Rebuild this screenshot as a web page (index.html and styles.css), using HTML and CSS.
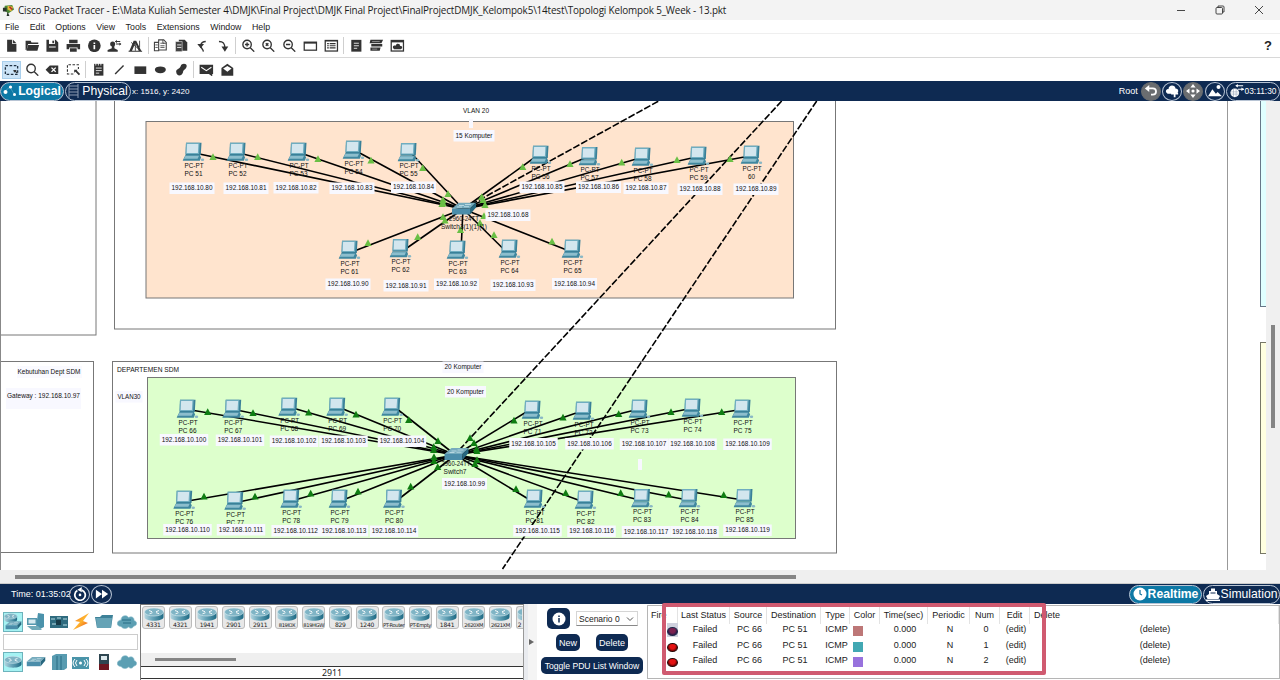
FILE: index.html
```html
<!DOCTYPE html>
<html lang="en">
<head>
<meta charset="utf-8">
<title>Cisco Packet Tracer</title>
<link rel="stylesheet" href="styles.css">
</head>
<body>
<svg class="defs" width="0" height="0" aria-hidden="true">
  <defs>
    <linearGradient id="body" x1="0" x2="1"><stop offset="0" stop-color="#b5d6e0"/><stop offset=".4" stop-color="#6ba7bb"/><stop offset="1" stop-color="#1d6a84"/></linearGradient>
    <linearGradient id="bolt" x1="0" y1="0" x2="1" y2="1"><stop offset="0" stop-color="#e85a1c"/><stop offset=".5" stop-color="#ffb52e"/><stop offset="1" stop-color="#e23a14"/></linearGradient>
    <symbol id="router" viewBox="0 0 20 14"><path d="M.5 4.500v5c0 5 19 5 19 0v-5z" fill="url(#body)"/><ellipse cx="10" cy="4.500" rx="9.500" ry="4" fill="#7fb4c5" stroke="#dceef3" stroke-width=".6"/><path d="M5 3l3 1.200M15 3l-3 1.200M5.500 6.300l3-1.100M15 6.200l-3-1.100" stroke="#fff" stroke-width=".9"/></symbol>
    <symbol id="pc" viewBox="0 0 22 19"><path d="M3.500 0H19l-.7 12.500H3z" fill="#3a8098"/><path d="M3.500 0h13.700l-.6 11.500H3z" fill="#6fadc0"/><path d="M4.600 1.400h11.300l-.5 9H4.200z" fill="#d3e6ee"/><path d="M3 12.500h14.500l1 2.500-1.200 3.300H0z" fill="#3f879f"/><path d="M3 13.200h13.500l-1.400 3H1.300z" fill="#8dbecd"/><ellipse cx="20" cy="17.200" rx="1.800" ry="1.200" fill="#8ab8c5"/></symbol>
    <symbol id="switch" viewBox="0 0 26 13"><path d="M1 6L8 0h17l-6 6z" fill="#76abbd"/><path d="M1 6h18v6H1z" fill="#4b8daa"/><path d="M19 6l6-6v5l-6 7z" fill="#27677f"/><path d="M8 3h5M14 2h6M6 4.500h5M13 4.200h5" stroke="#c8e2ea" stroke-width=".8"/></symbol>
    <symbol id="cloud" viewBox="0 0 20 14"><path d="M4 11.500C-1 11.500-1 5.500 4 5 4 0 10-.5 11.500 2.500c4-2 6 1 5.500 3 4 1 3 5.500 0 5.500-2 3-4 2.500-5.500 1-3 2.500-6 1.500-7.500-.5z" fill="#5c9fb3" stroke="#8abccb" stroke-width=".6"/></symbol>
  </defs>
</svg>

<div class="app">
  <header class="titlebar">
    <svg class="logo" viewBox="0 0 14 14"><path d="M3 2l8-1 2 5-6 4-5-3z" fill="#4d8a34"/><path d="M6 2l6 1-2 5-4-2z" fill="#e5b63b"/><path d="M1 4h4v4H1zM6 8l2 5H5z" fill="#29352c"/><path d="M8 3l3 3" stroke="#b52b27" stroke-width="1.500"/></svg>
    <span class="title">Cisco Packet Tracer - E:\Mata Kuliah Semester 4\DMJK\Final Project\DMJK Final Project\FinalProjectDMJK_Kelompok5\14test\Topologi Kelompok 5_Week - 13.pkt</span>
    <span class="winbtns">
      <svg viewBox="0 0 10 10"><path d="M1 5.500h8"/></svg>
      <svg viewBox="0 0 10 10"><rect x="1" y="2.500" width="6.500" height="6.500" rx="1"/><path d="M3 2.500V1h5q1 0 1 1v5H7.500"/></svg>
      <svg viewBox="0 0 10 10"><path d="M1 1l8 8M9 1L1 9"/></svg>
    </span>
  </header>
  <nav class="menu"><span>File</span><span>Edit</span><span>Options</span><span>View</span><span>Tools</span><span>Extensions</span><span>Window</span><span>Help</span></nav>

  <div class="toolbar first">
    <svg viewBox="0 0 16 16"><path d="M3 1h6v5h5v9H3zM10 1l4 4h-4z"/></svg>
    <svg viewBox="0 0 16 16"><path d="M0 2h6l1 2h8v2H3L1 13H0zM3 7h13l-2 7H1z"/></svg>
    <svg viewBox="0 0 16 16"><path fill-rule="evenodd" d="M1 1h11l3 3v11H1zM4 1v5h7V1zM4 9v1h8V9z"/><path d="M8 2h2v3H8z"/></svg>
    <svg viewBox="0 0 16 16"><path d="M3 1h10v4H3zM0 6h16v6h-3v-2H3v2H0zM4 11h8v4H4z"/></svg>
    <svg viewBox="0 0 16 16"><circle cx="8" cy="8" r="7.500"/><path d="M7 7h2v5H7zM7 4h2v2H7z" fill="#fff"/></svg>
    <svg viewBox="0 0 16 16"><circle cx="6" cy="6" r="3"/><path d="M5 8h3v3l4 2v2H0v-2l5-2z"/><path d="M9 3h6M10 6h6" stroke="#333" stroke-width="1.300"/><path d="M9 3l2-2v4zM16 6l-2-2v4z"/></svg>
    <svg viewBox="0 0 16 16"><path d="M1 14l5-12h3l6 12h-3L8 5l-4 9zM0 14h16v1H0z"/><path d="M3 4l9 8M8 5v9M13 2v8" stroke="#333"/></svg>
    <i></i>
    <svg viewBox="0 0 16 16"><path d="M1 4h5v10H1zM6 1h6l3 3v9H6z" fill="#fff" stroke="#444" stroke-width="1.300"/><path d="M2 7h3M2 10h3M8 5h5M8 8h5M8 10h5M11 1v4h4" fill="none" stroke="#444"/></svg>
    <svg viewBox="0 0 16 16"><path d="M5 1h7l3 3v10H5z"/><path d="M1 3h8v12H1z" fill="#444" stroke="#fff" stroke-width=".6"/><path d="M3 7h5M3 10h5" stroke="#fff"/></svg>
    <svg viewBox="0 0 16 16"><path d="M9 15c1-3-4-4-3-8 1-3 3-4 6-4" fill="none" stroke="#333" stroke-width="1.600"/><path d="M2 6h8l-4 5z"/></svg>
    <svg viewBox="0 0 16 16"><path d="M4 3c5 0 7 2 7 8" fill="none" stroke="#333" stroke-width="1.600"/><path d="M7 9h8l-4 6z"/></svg>
    <i></i>
    <svg viewBox="0 0 16 16"><circle cx="6.500" cy="6.500" r="5" class="ln"/><path d="M10 10l5 5M4 6.500h5M6.500 4v5" class="ln"/></svg>
    <svg viewBox="0 0 16 16"><circle cx="6.500" cy="6.500" r="5" class="ln"/><path d="M10 10l5 5M5 5l3 3M8 5L5 8" class="ln"/></svg>
    <svg viewBox="0 0 16 16"><circle cx="6.500" cy="6.500" r="5" class="ln"/><path d="M10 10l5 5M4 6.500h5" class="ln"/></svg>
    <svg viewBox="0 0 16 16"><rect x="0" y="3" width="16" height="11"/><rect x="1.500" y="5.500" width="13" height="7" fill="#fff"/></svg>
    <svg viewBox="0 0 16 16"><rect x="0" y="1" width="16" height="14"/><rect x="1.500" y="3" width="13" height="10.500" fill="#fff"/><path d="M3 5.500h2M6 5.500h7M3 8h2M6 8h7M3 10.500h2M6 10.500h7" stroke="#333" stroke-width="1.300"/></svg>
    <i></i>
    <svg viewBox="0 0 16 16"><path d="M2 1h12v14H2z"/><path d="M5 5h6M5 8h6M5 11h4" stroke="#fff"/></svg>
    <svg viewBox="0 0 16 16"><path d="M1 1h15l-2 4H0zM2 6h13v3H2zM1 10h12l-1 4H1z"/><path d="M3 3h9M3 12h6" stroke="#999"/></svg>
    <svg viewBox="0 0 16 16"><rect x="0" y="1" width="16" height="14"/><path d="M1.500 4h13v9.500h-13z" fill="#fff"/><path d="M4 12c-3-3 0-5 2-4 1-4 6-2 5 0 4 0 3 4 1 4z"/></svg>
    <b>?</b>
  </div>
  <div class="toolbar second">
    <svg class="sel" viewBox="0 0 16 16"><path d="M1 3h14v10H1z" fill="none" stroke="#234" stroke-width="1.500" stroke-dasharray="3 1.800"/><path d="M10 8h4l-1 1 2 2-1 1-2-2-1 1z"/></svg>
    <svg viewBox="0 0 16 16"><circle cx="6.500" cy="6.500" r="5" class="ln"/><path d="M10 10l5 5" class="ln"/></svg>
    <svg viewBox="0 0 16 16"><path d="M0 8l5-5h10v10H5z"/><path d="M7 5.500l5 5M12 5.500l-5 5" stroke="#fff" stroke-width="1.600"/></svg>
    <svg viewBox="0 0 16 16"><path d="M8 13H1V2h13v5" fill="none" stroke="#333" stroke-width="1.300" stroke-dasharray="3 1.800"/><path d="M9 8h4l-1 1 4 4-1.500 1.500-4-4-1.500 1z"/></svg>
    <i></i>
    <svg viewBox="0 0 16 16"><path d="M3 1h11v14H3z"/><path d="M5 6h7M5 9h7M5 12h4M5 0v3M8 0v3M11 0v3" stroke="#fff"/></svg>
    <svg viewBox="0 0 16 16"><path d="M3 13L13 3" class="ln"/></svg>
    <svg viewBox="0 0 16 16"><path d="M1 4h14v9H1z"/></svg>
    <svg viewBox="0 0 16 16"><ellipse cx="8" cy="8" rx="6.500" ry="4"/></svg>
    <svg viewBox="0 0 16 16"><path d="M2 11c-1-4 4-4 5-7 2-5 9-3 7 1-1 3-4 3-4 6-2 6-8 4-8 0z"/></svg>
    <i></i>
    <svg viewBox="0 0 16 16"><path d="M0 2h16v11h-1v3l-4-3H0z"/><path d="M2 5l6 4 6-4" fill="none" stroke="#fff" stroke-width="1.200"/></svg>
    <svg viewBox="0 0 16 16"><path d="M1 6l7-5 7 5v9H1z"/><path d="M3 6.500l5-3 5 3-5 4z" fill="#fff"/></svg>
  </div>

  <div class="navbar top">
    <span class="pill active logical"><svg viewBox="0 0 14 14"><path d="M2 7l5-4 4 7" fill="none" stroke="#4fa2c2" stroke-width=".8"/><circle cx="2.500" cy="8" r="2"/><circle cx="7.500" cy="3" r="1.600"/><circle cx="11.500" cy="10.500" r="1.500"/></svg>Logical</span>
    <span class="pill physical"><svg viewBox="0 0 11 14"><path d="M1 0v14M10 0v14M1 2h9M1 5h9M1 8h9M1 11h9" stroke="#8c9ab1"/></svg>Physical</span>
    <span class="coords">x: 1516, y: 2420</span>
    <span class="grow"></span>
    <span class="root">Root</span>
    <span class="circle gray"><svg viewBox="0 0 16 16"><path d="M4 5h6c5 0 5 7 0 7H8" class="wl"/><path d="M1 5l5-4v8z"/></svg></span>
    <span class="circle"><svg viewBox="0 0 16 16"><path d="M3 11c-4-2-1-6 1-5 0-6 8-5 8-1 4 0 4 5 1 6z"/><path d="M11 7v8M7 11h8" stroke="#fff" stroke-width="2"/></svg></span>
    <span class="circle gray"><svg viewBox="0 0 16 16"><path d="M8 0l3 4H5zM8 16l3-4H5zM0 8l4-3v6zM16 8l-4-3v6z"/><circle cx="8" cy="8" r="1.800"/></svg></span>
    <span class="circle"><svg viewBox="0 0 16 16"><path d="M0 14l5-8 4 5 2-2 5 5z"/><circle cx="12" cy="3.500" r="2.300"/></svg></span>
    <span class="clock"><svg viewBox="0 0 16 16"><circle cx="5.500" cy="10" r="5"/><path d="M1 9h9M1 11.500h9M4 5v10M7 5v10" stroke="#8b99ae" stroke-width=".6"/><path d="M7 2h8M9 6h7" stroke="#fff" stroke-width="1.400"/><path d="M6 2l3-2v4zM16 6l-3-2v4z"/></svg>03:11:30</span>
  </div>

  <main class="work">
    <svg id="topology" width="1266" height="469" viewBox="0 101 1266 469"></svg>
    <div class="vscroll"><span></span></div>
  </main>
  <div class="hscroll"><span></span></div>

  <div class="navbar bottom">
    <span class="time">Time: 01:35:02</span>
    <span class="circle wide"><svg viewBox="0 0 16 16"><path d="M10 3.500a6 6 0 1 1-5 .5" class="wl"/><circle cx="8" cy="9" r="1.500"/><path d="M10 0v6L5 3z"/></svg></span>
    <span class="circle wide"><svg viewBox="0 0 16 16"><path d="M1 3l7 5-7 5zM8 3l7 5-7 5z"/></svg></span>
    <span class="grow"></span>
    <span class="pill active realtime"><svg viewBox="0 0 14 14"><circle cx="7" cy="7" r="6.500"/><path d="M7 3v4l2 1" fill="none" stroke="#0d6f9a" stroke-width="1.200"/></svg>Realtime</span>
    <span class="pill simulation"><svg viewBox="0 0 14 14"><path d="M3 7V4h2V1.500h4V4h2v3l3 2-1.500 3h-11L0 9zM0 12.500h14V14H0z"/><path d="M4.500 6h5" stroke="#0e2a52"/></svg>Simulation</span>
  </div>

  <section class="bottom-panel">
    <div class="categories">
      <div class="cat-row">
        <span class="on"><svg viewBox="0 0 20 20"><use href="#router" x="0" y="0" width="15" height="11"/><use href="#switch" x="1" y="9" width="19" height="10"/></svg></span>
        <span><svg viewBox="0 0 20 20"><path d="M12 1l6 1v13l-4 2-4-2z" fill="#4b92ab"/><path d="M1 6h10v7H1z" fill="#5598ae"/><path d="M2.500 7.500h7v4h-7z" fill="#d6e9ef"/><path d="M1 14h11l4 4H6z" fill="#72abba"/></svg></span>
        <span><svg viewBox="0 0 20 20"><path d="M1 4h18v12H1z" fill="#2f6b7f"/><path d="M2 7h4M8 6h4M14 7h4M3 12h4M14 13h4" stroke="#8ab8c4" stroke-width="1.500"/><path d="M7 8h5v5H7z" fill="#183b48"/></svg></span>
        <span><svg viewBox="0 0 20 20"><path d="M18 1L4 9l5 1-7 8 15-7-5-2z" fill="url(#bolt)"/></svg></span>
        <span><svg viewBox="0 0 20 20"><path d="M1 5h5l2-2h11l-2 13H3z" fill="#3d8198"/><path d="M2 6h16l-1 10H3z" fill="#65a3b6"/></svg></span>
        <span><svg viewBox="0 0 20 20"><use href="#cloud" x="0" y="3" width="20" height="14"/><path d="M5 8h9M6 11h8" stroke="#276c85"/></svg></span>
      </div>
      <div class="cat-box"></div>
      <div class="cat-row">
        <span class="on"><svg viewBox="0 0 20 20"><use href="#router" x="0" y="3" width="20" height="14"/></svg></span>
        <span><svg viewBox="0 0 20 20"><use href="#switch" x="0" y="5" width="20" height="10"/></svg></span>
        <span><svg viewBox="0 0 20 20"><path d="M3 4l4-2h11v14l-3 2H3z" fill="#589bb0"/><path d="M8 4v14M12 4v14" stroke="#286c84"/></svg></span>
        <span><svg viewBox="0 0 20 20"><path d="M1 5h17v12H1z" fill="#4a94a9"/><path d="M6 8q-3 3 0 6M4 7q-4 4 0 8M13 8q3 3 0 6M15 7q4 4 0 8" fill="none" stroke="#fff"/><circle cx="9.500" cy="11" r="1.500" fill="#fff"/></svg></span>
        <span><svg viewBox="0 0 20 20"><path d="M5 2h10v10H5z" fill="#2e4651"/><path d="M7 4h6v4H7z" fill="#dce8ec"/><path d="M5 12h10v6H5z" fill="#6e1720"/></svg></span>
        <span><svg viewBox="0 0 20 20"><use href="#cloud" x="0" y="3" width="20" height="14"/></svg></span>
      </div>
    </div>
    <div class="devices">
      <div class="device-list" id="devices"></div>
      <div class="device-scroll"><span></span></div>
      <div class="device-name">2911</div>
    </div>
    <div class="splitter"><span></span></div>
    <div class="controls">
      <div class="ctl-row">
        <button class="info"><svg viewBox="0 0 14 14"><circle cx="7" cy="7" r="6.500" fill="#fff"/><path d="M7 6v4.500M7 3.500V5" stroke="#0e2a52" stroke-width="1.500"/></svg></button>
        <span class="select">Scenario 0<svg viewBox="0 0 8 6"><path d="M1 1.500l3 3 3-3" fill="none" stroke="#555"/></svg></span>
      </div>
      <div class="ctl-row mid"><button>New</button><button>Delete</button></div>
      <button class="toggle">Toggle PDU List Window</button>
    </div>
    <div class="pdu">
      <div class="row head"><span class="first-col">Fire</span><span>Last Status</span><span>Source</span><span>Destination</span><span>Type</span><span>Color</span><span>Time(sec)</span><span>Periodic</span><span>Num</span><span>Edit</span><span class="del">Delete</span></div>
      <div class="row"><span class="fire hl"><em></em></span><span>Failed</span><span>PC 66</span><span>PC 51</span><span>ICMP</span><span class="sw"><em class="rose"></em></span><span>0.000</span><span>N</span><span>0</span><span>(edit)</span><span>(delete)</span></div>
      <div class="row"><span class="fire"><em></em></span><span>Failed</span><span>PC 66</span><span>PC 51</span><span>ICMP</span><span class="sw"><em class="teal"></em></span><span>0.000</span><span>N</span><span>1</span><span>(edit)</span><span>(delete)</span></div>
      <div class="row"><span class="fire"><em></em></span><span>Failed</span><span>PC 66</span><span>PC 51</span><span>ICMP</span><span class="sw"><em class="violet"></em></span><span>0.000</span><span>N</span><span>2</span><span>(edit)</span><span>(delete)</span></div>
      <div class="frame"></div>
    </div>
  </section>
</div>
<script src="script.js"></script>
</body>
</html>
```

FILE: styles.css
```css
* { box-sizing: border-box; }
body { margin: 0; background: #fff; color: #222; font-family: "Liberation Sans", Arial, sans-serif; font-size: 9px; overflow: hidden; }
.defs { position: absolute; }
.app { width: 1280px; height: 680px; display: flex; flex-direction: column; overflow: hidden; }
.app > * { flex: none; }
.grow { flex: 1; }

.titlebar { height: 20px; background: #f3f3f3; display: flex; align-items: center; padding-left: 2px; }
.logo { width: 13px; height: 13px; margin-right: 3px; }
.title { font: 9.9px/20px "Open Sans", "Noto Sans", sans-serif; letter-spacing: -0.15px; white-space: nowrap; color: #1c1c1c; }
.winbtns { margin-left: auto; display: flex; gap: 29px; padding-right: 16px; }
.winbtns svg { width: 10px; height: 10px; fill: none; stroke: #333; stroke-width: 0.9; }

.menu { height: 14px; display: flex; gap: 10.5px; padding-left: 5px; line-height: 14px; font-size: 8.8px; border-bottom: 1px solid #efefef; }

.toolbar { display: flex; align-items: center; padding-left: 1px; }
.toolbar.first { height: 24px; border-bottom: 1px solid #d8d8d8; }
.toolbar.second { height: 23px; }
.toolbar svg { width: 20.7px; height: 13.5px; fill: #333; }
.toolbar .sel { background: #cce4f7; height: 16px; padding: 1px 0; width: 17px; margin: 0 1.8px; outline: 1px solid #a9cfec; }
.toolbar .ln { fill: none; stroke: #333; stroke-width: 1.6; }
.toolbar i { width: 1px; height: 17px; margin: 0 1.8px; background: #cfcfcf; }
.toolbar b { margin-left: auto; padding-right: 8px; font-size: 13px; color: #222; }

.navbar { background: #0e2a52; color: #fff; display: flex; align-items: center; height: 20px; }
.navbar svg { fill: #fff; }
.navbar .wl { fill: none; stroke: #fff; stroke-width: 2; }
.pill { height: 19px; border: 1px solid #b8c4d4; border-radius: 10px; display: flex; align-items: center; justify-content: center; font-size: 12.2px; white-space: nowrap; }
.pill svg { width: 14px; height: 14px; margin-right: 1px; flex: none; }
.pill.active { background: #0d78a5; font-weight: bold; }
.logical { width: 64px; }
.physical { width: 66px; margin-left: 1px; }
.physical svg { width: 11px; margin-right: 3px; }
.coords { margin-left: 1px; font-size: 8.1px; }
.root { margin-right: 3px; font-size: 9px; }
.circle { width: 20px; height: 19px; margin-right: 1.3px; border: 1px solid #b8c4d4; border-radius: 50%; display: flex; align-items: center; justify-content: center; }
.circle svg { width: 14px; height: 14px; }
.circle.gray { background: #6a6d70; border-color: #6a6d70; }
.circle.wide { width: 21px; margin-right: 1px; }
.clock { width: 54px; height: 19px; border: 1px solid #b8c4d4; border-radius: 10px; display: flex; align-items: center; justify-content: center; gap: 1px; font-size: 8.4px; }
.clock svg { width: 14px; height: 14px; }
.time { margin-left: 11px; font-size: 9px; width: 58px; white-space: nowrap; }
.realtime { width: 73px; margin-right: 1px; }
.simulation { width: 77px; }

.work { height: 469px; display: flex; }
#topology { flex: none; display: block; font-size: 7px; }
#topology text { fill: #111; dominant-baseline: central; text-anchor: middle; }
.vscroll { flex: 1; background: #f0f0f0; padding: 224px 0 0 5px; }
.vscroll span { display: block; width: 4px; height: 103px; background: #858585; }
.hscroll { height: 14px; background: #efefef; padding: 5px 0 0 15px; border-bottom: 1px solid #ccc; }
.hscroll span { display: block; width: 781px; height: 4px; background: #858585; }

.bottom-panel { height: 76px; display: flex; }
.categories { width: 140px; padding: 8px 3px 0; }
.cat-row { display: flex; gap: 2.8px; }
.cat-row span { width: 20px; height: 20px; flex: none; }
.cat-row svg { width: 100%; height: 100%; display: block; }
.cat-row .on { background: #a5f2f3; border: 1px solid #6db3bc; }
.cat-box { height: 16px; border: 1px solid #ccc; margin: 2px -1px 2px 0; }

.devices { width: 384px; border: 1px solid #777; border-right-color: #999; border-bottom: 0; }
.device-list { height: 48px; display: flex; gap: 3.7px; padding: 1px 0 0 1px; overflow: hidden; }
.dev { flex: none; width: 23px; height: 23px; border: 1px solid #bbb; border-radius: 3px; background: #e8e8e8; display: flex; flex-direction: column; align-items: center; font: 6px/6px "DejaVu Sans", sans-serif; letter-spacing: -0.2px; white-space: nowrap; }
.dev svg { width: 20px; height: 15px; flex: none; }
.dev.long { font-size: 5.2px; letter-spacing: -0.4px; }
.dev:last-child { width: 7px; border-right: 0; border-radius: 3px 0 0 3px; }
.dev:last-child svg { width: 5px; }
.device-scroll { height: 13px; background: #efefef; padding: 5px 0 0 14px; }
.device-scroll span { display: block; width: 81px; height: 3px; background: #858585; }
.device-name { height: 13px; border-top: 1px solid #333; border-bottom: 1px solid #333; text-align: center; font: 8.8px/12px "Noto Sans", sans-serif; }
.splitter { width: 13px; margin-right: 2px; border-left: 4px solid #e9ebef; background: #f4f4f4; display: flex; align-items: center; padding-left: 1px; }
.splitter span { border-left: 5px solid #666; border-top: 3px solid transparent; border-bottom: 3px solid transparent; }

.controls { width: 108px; padding: 4px 2px 0 2px; }
.ctl-row { display: flex; align-items: center; padding-left: 6px; gap: 6px; }
.controls button { font: 9px/14px "Liberation Sans", Arial, sans-serif; color: #fff; background: #0e2a52; border: 0; border-radius: 5px; height: 17px; padding: 0; }
.controls .info { width: 23px; height: 21px; display: flex; align-items: center; justify-content: center; }
.info svg { width: 14px; height: 14px; }
.select { width: 62px; height: 15px; border: 1px solid #d5d5d5; border-bottom-color: #888; display: flex; align-items: center; justify-content: space-between; padding: 0 3px 0 2px; white-space: nowrap; font-size: 8.5px; }
.select svg { width: 8px; height: 6px; }
.ctl-row.mid { padding: 5px 0 6px 15px; gap: 16px; }
.mid button:first-child { width: 24px; }
.mid button:last-child { width: 32px; }
.controls .toggle { width: 102px; display: block; font-size: 8.6px; white-space: nowrap; }

.pdu { position: relative; flex: 1; border: 1px solid #b5b5b5; margin: 1px 0; }
.row { display: grid; grid-template-columns: 30px 52px 37px 54px 29px 30px 48px 42px 30px 30px 1fr; height: 15.7px; line-height: 12px; padding-left: 1px; text-align: center; white-space: nowrap; }
.row.head { height: 17px; line-height: 18px; padding-left: 0; }
.row.head span { border-right: 1px solid #e3e3e3; }
.row .first-col { text-align: left; padding-left: 3px; }
.row .del { text-align: left; padding-left: 4px; }
.row em { display: block; }
.fire { padding: 4px 0 0 18px; }
.fire em { width: 11px; height: 9px; border-radius: 50%; border: 1px solid #200; background: radial-gradient(ellipse at 50% 30%, #e51212 40%, #500 80%); }
.hl { background: linear-gradient(#cfd1de, #cfd1de) 18px 0/11px 14px no-repeat; }
.hl em { background: radial-gradient(ellipse at 50% 30%, #7b2150 40%, #1b1b47 80%); border-color: #1b2547; }
.sw { padding: 3px 0 0 2px; }
.sw em { width: 10px; height: 10px; }
.rose { background: #bd7777; }
.teal { background: #42a8b3; }
.violet { background: #9872dd; }
.frame { position: absolute; left: 14px; top: -3px; width: 384px; height: 72px; border: 4px solid #d05a70; border-radius: 2px; }
```

FILE: script.js
```js
const root = document.getElementById('topology');
const NS = 'http://www.w3.org/2000/svg';
function add(tag, attrs, text) {
  const el = document.createElementNS(NS, tag);
  for (const k in attrs) el.setAttribute(k, attrs[k]);
  if (text) el.textContent = text;
  root.appendChild(el);
}
const rect = (x, y, w, h, fill, stroke) => add('rect', { x, y, width: w, height: h, fill, stroke: stroke || 'none' });
const line = (x1, y1, x2, y2, dash) => add('line', { x1, y1, x2, y2, stroke: '#000', 'stroke-width': 1.6, 'stroke-dasharray': dash || 'none' });
const label = (x, y, w, text) => add('text', { x, y: y - 0.8, textLength: w, lengthAdjust: 'spacingAndGlyphs' }, text);
function note(x, y, w, text) {
  rect(x - w / 2 - 2, y - 6, w + 4, 11.5, '#f8f8ff');
  label(x, y, w, text);
}

// x, top, name, address, address x, address y
const vlan20 = [
  [193, 143, 'PC 51', '80', 192, 188.5], [237, 143, 'PC 52', '81', 246, 188.5], [298, 143, 'PC 53', '82', 296, 188],
  [353, 141, 'PC 54', '83', 352, 188.5], [408, 143.5, 'PC 55', '84', 413.5, 187.5], [540, 146, 'PC 56', '85', 542, 187.5],
  [589, 147.5, 'PC 57', '86', 598.5, 187.5], [642, 148, 'PC 58', '87', 646, 188.5], [698, 147, 'PC 59', '88', 700, 189.5],
  [751, 146, '60', '89', 756, 189.5], [349, 241, 'PC 61', '90', 348, 284.5], [400, 239.5, 'PC 62', '91', 406, 286],
  [457, 241, 'PC 63', '92', 456.5, 284.5], [509, 240, 'PC 64', '93', 513, 285.5], [572, 240, 'PC 65', '94', 574.5, 284]];
const vlan30 = [
  [187, 400, 'PC 66', '100', 184, 440], [232.7, 400, 'PC 67', '101', 240, 440.5], [288.7, 398, 'PC 68', '102', 294, 441.5],
  [336.7, 398, 'PC 69', '103', 343.5, 441.5], [391.7, 398, 'PC 70', '104', 402, 441.5], [183.7, 491, 'PC 76', '110', 187.5, 530],
  [234.7, 492, 'PC 77', '111', 241, 530], [290.7, 490, 'PC 78', '112', 295.7, 531], [339, 490, 'PC 79', '113', 344, 531],
  [393.5, 490, 'PC 80', '114', 394, 531.5], [532, 401, 'PC 71', '105', 533.5, 444], [583, 402, 'PC 72', '106', 589.5, 444],
  [639, 400, 'PC 73', '107', 644, 444.5], [692, 399, 'PC 74', '108', 692.5, 444.5], [742, 400, 'PC 75', '109', 747.5, 444.5],
  [534, 490, 'PC 81', '115', 537.5, 531], [585, 491, 'PC 82', '116', 591.5, 531.5], [641.5, 489.5, 'PC 83', '117', 646, 532],
  [689, 489.5, 'PC 84', '118', 694.5, 532], [744, 489.5, 'PC 85', '119', 747.5, 530.5]];
const light = [[213, 157], [257.7, 157], [318, 159], [371, 160.5], [422.7, 168], [448, 194], [442, 204], [443, 200], [443, 203],
  [522.7, 167], [570, 164], [621.7, 162.5], [677, 160], [730, 159], [481.7, 197], [483, 200], [485, 205], [368, 243], [417.7, 237],
  [460.5, 230], [494, 235], [552, 241.5], [443, 217], [445, 220.5], [480, 223], [484, 216]];
const dark = [[207.7, 412], [253, 413], [308.7, 412.5], [356, 414.5], [408.7, 420], [438, 441], [433.7, 447], [433.7, 450], [434, 457],
  [434, 461], [437.7, 467], [514, 420.5], [563, 417.5], [618.7, 414], [671, 412], [721.7, 412], [470, 438], [474, 443], [476.5, 449],
  [477, 451], [477, 460], [475, 464], [204, 496.5], [255, 496.5], [310.7, 493.5], [358, 491.5], [410.7, 486.5], [516, 489],
  [565.7, 493], [620.7, 493], [668.7, 494.5], [723.7, 495]];

rect(0, 101, 1266, 469, '#fff');
rect(-5, 90, 101, 245, '#fff', '#777');
rect(114.5, 90, 721, 239, '#fff', '#777');
rect(146, 121.5, 647.5, 176.5, '#ffe4ce', '#777');
rect(-5, 361.5, 98.5, 191, '#fff', '#777');
rect(112.5, 361.5, 724, 191.5, '#fff', '#777');
rect(147.5, 377.5, 648, 161, '#ddffcc', '#777');
rect(0, 101, 1, 469, '#888');
rect(1227, 101, 1, 469, '#999');
rect(1260.5, 90, 10, 216.5, '#e0ffff', '#678');
rect(1260.5, 342.5, 10, 211, '#ffffe0', '#776');

rect(6, 388, 75, 21, '#f8f8ff');
rect(17, 366, 65, 12, '#fafaff');
vlan20.forEach(p => line(p[0] + (p[0] < 463 ? 4 : -4), p[1] + 10.5, 463, 209));
vlan30.forEach(p => line(p[0] + (p[0] < 455 ? 4 : -4), p[1] + 10, 455.5, 455));
line(463, 209, 658.7, 101, '7 2');
line(781.7, 101, 455.5, 454, '7 2');
line(816.7, 101, 502.5, 569, '7 2');

function pcs(list, tri, color, sx, sy) {
  list.forEach(p => add('use', { href: '#pc', x: p[0] - 10.5, y: p[1] - 0.5, width: 22, height: 19 }));
  add('use', { href: '#switch', x: sx - 12, y: sy - 6, width: 26, height: 13 });
  list.forEach(p => {
    label(p[0] + 1, p[1] + 23, 19, 'PC-PT');
    label(p[0] + 0.5, p[1] + 31, p[2].length > 2 ? 18 : 7, p[2]);
  });
  tri.forEach(t => add('path', { d: `M${t[0] - 3.6} ${t[1] + 3}L${t[0]} ${t[1] - 3.8}L${t[0] + 3.6} ${t[1] + 3}z`, fill: color }));
}
pcs(vlan20, light, '#6abf45', 463, 208.5);
pcs(vlan30, dark, '#0f7d12', 455.5, 454);
label(464, 219.5, 30, '2960-24TT');
label(464, 227.5, 46, 'Switch3(1)(1)(1)');
label(456, 464.5, 29, '2960-24TT');
label(455, 472.5, 23, 'Switch7');
vlan20.forEach(p => note(p[4], p[5], 41, '192.168.10.' + p[3]));
vlan30.forEach(p => note(p[4], p[5], 44.5, '192.168.10.' + p[3]));
note(508, 215.5, 41, '192.168.10.68');
note(464.5, 484, 41, '192.168.10.99');
rect(469, 119, 4, 9, '#f8f8ff');
label(476, 111, 26, 'VLAN 20');
note(474, 136, 37, '15 Komputer');
note(463, 367.5, 37, '20 Komputer');
note(465.5, 392, 37, '20 Komputer');
rect(638, 459, 4, 11, '#f8f8ff');
label(148, 370, 62, 'DEPARTEMEN SDM');
note(129, 397, 23, 'VLAN30');
label(49, 372, 63, 'Kebutuhan Dept SDM');
label(43.5, 396.5, 73, 'Gateway :  192.168.10.97');

const names = ['4331', '4321', '1941', '2901', '2911', '819IOX', '819HGW', '829', '1240', 'PT-Router', 'PT-Empty', '1841', '2620XM', '2621XM', '2'];
document.getElementById('devices').innerHTML = names.map(n =>
  `<div class="dev${n.length > 4 ? ' long' : ''}"><svg viewBox="0 0 20 15" preserveAspectRatio="xMinYMid slice"><use href="#router" width="20" height="15"/></svg>${n}</div>`).join('');
```
